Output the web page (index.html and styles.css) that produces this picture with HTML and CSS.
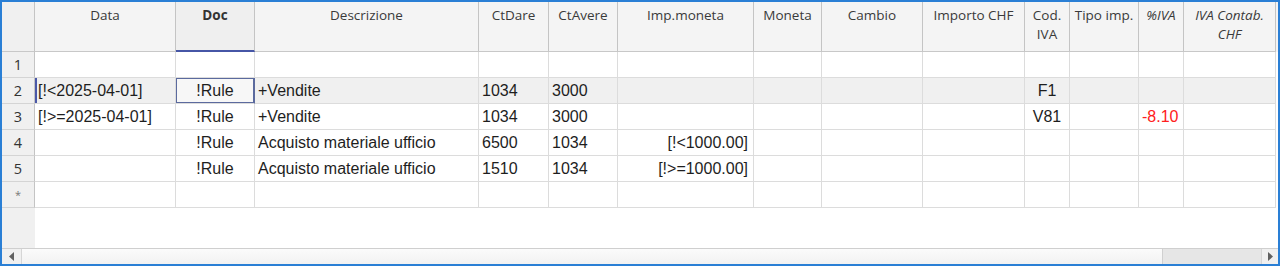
FILE: index.html
```html
<!DOCTYPE html>
<html lang="it">
<head>
<meta charset="utf-8">
<title>Registrazioni</title>
<link rel="stylesheet" href="styles.css">
</head>
<body>
<div class="frame">
  <div class="table">
    <div class="row head">
      <div class="hc rn"></div>
      <div class="hc">Data</div>
      <div class="hc doc">Doc</div>
      <div class="hc">Descrizione</div>
      <div class="hc">CtDare</div>
      <div class="hc">CtAvere</div>
      <div class="hc">Imp.moneta</div>
      <div class="hc">Moneta</div>
      <div class="hc">Cambio</div>
      <div class="hc">Importo CHF</div>
      <div class="hc">Cod.<br>IVA</div>
      <div class="hc">Tipo imp.</div>
      <div class="hc it">%IVA</div>
      <div class="hc it">IVA Contab.<br>CHF</div>
    </div>
    <div class="row">
      <div class="c rn">1</div>
      <div class="c"></div><div class="c"></div><div class="c"></div><div class="c"></div><div class="c"></div><div class="c"></div><div class="c"></div><div class="c"></div><div class="c"></div><div class="c"></div><div class="c"></div><div class="c"></div><div class="c"></div>
    </div>
    <div class="row cur">
      <div class="c rn">2</div>
      <div class="c mark">[!&lt;2025-04-01]</div>
      <div class="c ctr focus">!Rule</div>
      <div class="c">+Vendite</div>
      <div class="c">1034</div>
      <div class="c">3000</div>
      <div class="c"></div><div class="c"></div><div class="c"></div><div class="c"></div>
      <div class="c ctr">F1</div>
      <div class="c"></div><div class="c"></div><div class="c"></div>
    </div>
    <div class="row">
      <div class="c rn">3</div>
      <div class="c">[!&gt;=2025-04-01]</div>
      <div class="c ctr">!Rule</div>
      <div class="c">+Vendite</div>
      <div class="c">1034</div>
      <div class="c">3000</div>
      <div class="c"></div><div class="c"></div><div class="c"></div><div class="c"></div>
      <div class="c ctr">V81</div>
      <div class="c"></div>
      <div class="c num neg">-8.10</div>
      <div class="c"></div>
    </div>
    <div class="row">
      <div class="c rn">4</div>
      <div class="c"></div>
      <div class="c ctr">!Rule</div>
      <div class="c">Acquisto materiale ufficio</div>
      <div class="c">6500</div>
      <div class="c">1034</div>
      <div class="c num">[!&lt;1000.00]</div>
      <div class="c"></div><div class="c"></div><div class="c"></div><div class="c"></div><div class="c"></div><div class="c"></div><div class="c"></div>
    </div>
    <div class="row">
      <div class="c rn">5</div>
      <div class="c"></div>
      <div class="c ctr">!Rule</div>
      <div class="c">Acquisto materiale ufficio</div>
      <div class="c">1510</div>
      <div class="c">1034</div>
      <div class="c num">[!&gt;=1000.00]</div>
      <div class="c"></div><div class="c"></div><div class="c"></div><div class="c"></div><div class="c"></div><div class="c"></div><div class="c"></div>
    </div>
    <div class="row">
      <div class="c rn star">*</div>
      <div class="c"></div><div class="c"></div><div class="c"></div><div class="c"></div><div class="c"></div><div class="c"></div><div class="c"></div><div class="c"></div><div class="c"></div><div class="c"></div><div class="c"></div><div class="c"></div><div class="c"></div>
    </div>
  </div>
  <div class="filler"></div>
  <div class="hscroll">
    <div class="sbtn"><svg width="6" height="9" viewBox="0 0 6 9"><path d="M5 0 L0 4.5 L5 9 Z" fill="#606060"/></svg></div>
    <div class="thumb"></div>
    <div class="track"></div>
    <div class="sbtn"><svg width="6" height="9" viewBox="0 0 6 9"><path d="M1 0 L6 4.5 L1 9 Z" fill="#606060"/></svg></div>
  </div>
</div>
</body>
</html>
```

FILE: styles.css
```css
html, body {
  margin: 0;
  padding: 0;
  background: #ffffff;
}

.frame {
  width: 1280px;
  height: 266px;
  box-sizing: border-box;
  border: 2px solid #2a7fd5;
  background: #ffffff;
  display: flex;
  flex-direction: column;
  overflow: hidden;
}

.table {
  display: flex;
  flex-direction: column;
}

.row {
  display: grid;
  grid-template-columns: 33px 141px 79px 224px 70px 69px 136px 68px 101px 102px 45px 69px 45px 92px;
  height: 26px;
}

.row.head {
  height: 50px;
  background: #f4f4f4;
}

.hc {
  box-sizing: border-box;
  border-right: 1px solid #c4c4c4;
  border-bottom: 1px solid #c8c8c8;
  font-family: "Open Sans", "Noto Sans", sans-serif;
  font-size: 13.5px;
  line-height: 19px;
  color: #3a3a3a;
  text-align: center;
  padding-top: 4px;
  white-space: nowrap;
  overflow: hidden;
}

.hc.doc {
  font-weight: bold;
  color: #333333;
  background: #efefef;
  border-bottom: 2px solid #4656a6;
}

.hc.it {
  font-style: italic;
}

.hc.rn {
  background: #f0f0f0;
}

.c {
  box-sizing: border-box;
  border-right: 1px solid #dcdcdc;
  border-bottom: 1px solid #dcdcdc;
  font-family: "Liberation Sans", Arial, sans-serif;
  font-size: 16px;
  line-height: 26px;
  color: #1e1e1e;
  padding: 0 4px 0 3px;
  white-space: nowrap;
  overflow: hidden;
}

.c.rn {
  background: #f0f0f0;
  border-right: 1px solid #c4c4c4;
  border-bottom: 1px solid #d4d4d4;
  font-family: "Open Sans", "Noto Sans", sans-serif;
  font-size: 14.5px;
  color: #333333;
  text-align: center;
  padding: 0;
}

.c.rn.star {
  font-size: 11px;
  color: #777777;
}

.c.ctr {
  text-align: center;
  padding: 0;
}

.c.num {
  text-align: right;
  padding-right: 5px;
}

.c.neg {
  color: #ff2020;
}

.row.cur .c {
  background: #f0f0f0;
}

.row.cur .c.mark {
  box-shadow: inset 2px 0 0 #4a58a8;
}

.row.cur .c.focus {
  background: #f7f7f7;
  box-shadow: inset 0 0 0 1px #5b6a9e;
  border-right-color: #5b6a9e;
}

.filler {
  flex: 1;
  background: linear-gradient(to right, #f0f0f0 33px, #ffffff 33px);
}

.hscroll {
  height: 16px;
  box-sizing: border-box;
  border-top: 1px solid #cfcfcf;
  display: flex;
  background: #e8e8e8;
}

.sbtn {
  width: 19px;
  display: flex;
  align-items: center;
  justify-content: center;
  background: #f0f0f0;
  border-right: 1px solid #d6d6d6;
}

.sbtn:last-child {
  width: 16px;
  border-right: none;
  border-left: 1px solid #d6d6d6;
}

.thumb {
  width: 1140px;
  background: linear-gradient(#fbfbfb, #f2f2f2);
  border-right: 1px solid #d0d0d0;
}

.track {
  flex: 1;
  background: #e6e6e6;
}
```
